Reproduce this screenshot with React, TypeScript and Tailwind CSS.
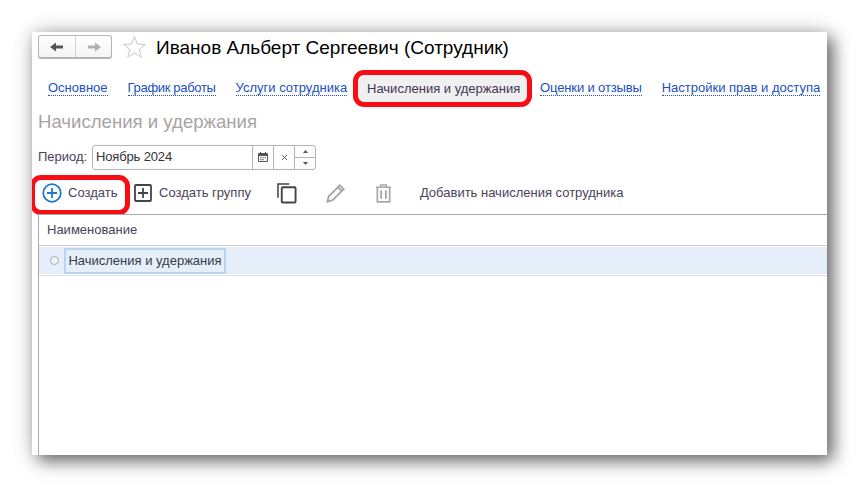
import React from "react";

const Tab = ({ children, className = "" }: { children: React.ReactNode; className?: string }) => (
  <a className={`text-[13px] leading-[14px] text-[#2050c0] border-b border-dotted border-[#2050c0] whitespace-nowrap ${className}`}>{children}</a>
);

export default function App() {
  return (
    <div className="w-[859px] h-[487px] bg-white overflow-hidden pt-[32px] pl-[32px] font-['Liberation_Sans',Arial,sans-serif]">
      <div className="w-[795px] h-[423px] bg-white shadow-[6px_6px_16px_rgba(0,0,0,0.55),0_0_20px_rgba(0,0,0,0.18)] flex flex-col pl-[6px] overflow-hidden">
        {/* header */}
        <div className="flex items-center h-[24px] mt-[3px] shrink-0">
          <div className="flex w-[74px] h-[24px] rounded-[3px] border border-[#b4b4b4] border-b-2 bg-gradient-to-b from-white to-[#f4f4f4]">
            <div className="w-[37px] flex items-center justify-center border-r border-[#d4d4d4]">
              <svg width="16" height="12" viewBox="0 0 16 12"><path d="M1 6 L7 1.5 V4.5 H14 V7.5 H7 V10.5 Z" fill="#555" /></svg>
            </div>
            <div className="flex-1 flex items-center justify-center">
              <svg width="16" height="12" viewBox="0 0 16 12"><path d="M15 6 L9 1.5 V4.5 H2 V7.5 H9 V10.5 Z" fill="#b0b0b0" /></svg>
            </div>
          </div>
          <svg className="ml-[10px]" width="25" height="24" viewBox="0 0 25 24"><path d="M12.5 1.5 L15.4 9 L23.5 9.4 L17.2 14.4 L19.3 22.3 L12.5 17.9 L5.7 22.3 L7.8 14.4 L1.5 9.4 L9.6 9 Z" fill="none" stroke="#c8c8c8" strokeWidth="1" /></svg>
          <h1 className="ml-[9px] mt-[1px] text-[19px] leading-[24px] text-black whitespace-nowrap">Иванов Альберт Сергеевич (Сотрудник)</h1>
        </div>

        {/* tabs */}
        <div className="flex items-center h-[37px] mt-[11px] pl-[10px] shrink-0">
          <Tab>Основное</Tab>
          <Tab className="ml-[20px] tracking-[-0.32px]">График работы</Tab>
          <Tab className="ml-[20px]">Услуги сотрудника</Tab>
          <div className="ml-[6px] w-[179px] h-[37px] pl-[2px] border-[5px] border-[#f80d14] rounded-[11px] bg-[#f0f0f0] flex items-center justify-center text-[13px] text-[#3f3553] whitespace-nowrap shrink-0">Начисления и удержания</div>
          <Tab className="ml-[8px] tracking-[-0.14px]">Оценки и отзывы</Tab>
          <Tab className="ml-[20px]">Настройки прав и доступа</Tab>
        </div>

        <div className="mt-[3px] h-[24px] flex items-center text-[18.6px] text-[#a8a4a4] whitespace-nowrap shrink-0">Начисления и удержания</div>

        {/* period */}
        <div className="flex items-center h-[24px] mt-[11px] shrink-0">
          <span className="text-[13px] text-[#4a4258] w-[54px]">Период:</span>
          <div className="flex w-[224px] h-[25px] border border-[#b4b4b4] rounded-[3px] bg-white">
            <div className="w-[159px] pl-[3px] flex items-center text-[13px] tracking-[-0.15px] text-[#333]">Ноябрь 2024</div>
            <div className="w-[21px] border-l border-[#b4b4b4] flex items-center justify-center">
              <svg width="10" height="10" viewBox="0 0 10 10"><path d="M0.5 1.5 H9.5 V9.5 H0.5 Z" fill="none" stroke="#555" /><path d="M0.5 2 H9.5 V4 H0.5 Z" fill="#555" /><path d="M2 5 H3.5 V6.2 H2 Z M4.3 5 H5.7 V6.2 H4.3 Z M6.5 5 H8 V6.2 H6.5 Z M2 7 H3.5 V8.2 H2 Z M4.3 7 H5.7 V8.2 H4.3 Z" fill="#777" /><path d="M2.5 0 V2 M7.5 0 V2" stroke="#555" /></svg>
            </div>
            <div className="w-[21px] border-l border-[#b4b4b4] flex items-center justify-center">
              <svg width="7" height="7" viewBox="0 0 7 7"><path d="M1 1 L6 6 M6 1 L1 6" stroke="#666" strokeWidth="1" /></svg>
            </div>
            <div className="flex-1 border-l border-[#b4b4b4] flex flex-col">
              <div className="flex-1 flex items-center justify-center border-b border-[#b4b4b4]">
                <svg width="5" height="3" viewBox="0 0 5 3"><path d="M2.5 0 L5 3 H0 Z" fill="#555" /></svg>
              </div>
              <div className="flex-1 flex items-center justify-center">
                <svg width="5" height="3" viewBox="0 0 5 3"><path d="M0 0 H5 L2.5 3 Z" fill="#555" /></svg>
              </div>
            </div>
          </div>
        </div>

        {/* toolbar */}
        <div className="flex items-center h-[38px] mt-[5px] -ml-[8px] shrink-0">
          <div className="w-[100px] h-[40px] mt-[4px] pb-[4px] border-[5px] border-[#f80d14] rounded-[11px] flex items-center pl-[7px] bg-white shrink-0">
            <svg width="20" height="20" viewBox="0 0 20 20"><circle cx="10" cy="10" r="8.8" fill="none" stroke="#1f78d1" strokeWidth="1.8" /><path d="M10 5 V15 M5 10 H15" stroke="#1f78d1" strokeWidth="1.8" /></svg>
            <span className="ml-[6px] text-[13px] text-[#4a4258] whitespace-nowrap">Создать</span>
          </div>
          <svg className="ml-[4px]" width="18" height="18" viewBox="0 0 18 18"><rect x="1" y="1" width="16" height="16" rx="1" fill="none" stroke="#444" strokeWidth="1.8" /><path d="M9 4 V14 M4 9 H14" stroke="#444" strokeWidth="1.8" /></svg>
          <span className="ml-[7px] text-[13px] text-[#4a4258] whitespace-nowrap">Создать группу</span>
          <svg className="ml-[26px]" width="20" height="22" viewBox="0 0 21 22"><path d="M1 16 V1.5 H13" fill="none" stroke="#444" strokeWidth="1.6" /><rect x="5" y="5" width="14.5" height="16" rx="1" fill="none" stroke="#444" strokeWidth="2" /></svg>
          <svg className="ml-[28px]" width="21" height="21" viewBox="0 0 22 22"><path d="M2.5 19.5 L4 14 L15.5 2.5 L19.5 6.5 L8 18 Z" fill="none" stroke="#a8a8a8" strokeWidth="2" /><path d="M13.5 4.5 L17.5 8.5" stroke="#a8a8a8" strokeWidth="2" /></svg>
          <svg className="ml-[29px]" width="17" height="19" viewBox="0 0 18 20"><path d="M1 3.5 H17 M6 3 V1 H12 V3" fill="none" stroke="#a8a8a8" strokeWidth="1.6" /><path d="M2.5 3.5 V18.8 H15.5 V3.5" fill="none" stroke="#a8a8a8" strokeWidth="1.8" /><path d="M6.5 6.5 V15.5 M11.5 6.5 V15.5" stroke="#a8a8a8" strokeWidth="2" /></svg>
          <span className="ml-[28px] text-[13px] text-[#4a4258] whitespace-nowrap">Добавить начисления сотрудника</span>
        </div>

        {/* table */}
        <div className="flex-1 border-l border-t border-[#a8a8a8] flex flex-col min-h-0 mt-[2px]">
          <div className="h-[31px] flex items-center pl-[8px] text-[13px] text-[#4a4258] border-b border-[#cfcfcf] shrink-0">Наименование</div>
          <div className="h-[27px] mt-[1px] bg-[#e6eff9] flex items-center shrink-0">
            <span className="ml-[11px] w-[9px] h-[9px] rounded-full border border-[#a8a8a8] bg-white/40 shrink-0" />
            <span className="ml-[5px] h-[26px] w-[162px] flex items-center justify-center border-2 border-[#b8d4f0] text-[13px] text-[#333c4a] whitespace-nowrap">Начисления и удержания</span>
          </div>
          <div className="h-[1px] mt-[1px] bg-[#e2e2e2] shrink-0" />
        </div>
      </div>
    </div>
  );
}
